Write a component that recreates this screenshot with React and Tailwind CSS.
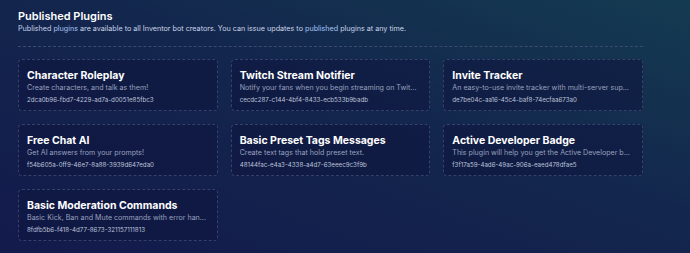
import React from "react";

const plugins = [
  { name: "Character Roleplay", desc: "Create characters, and talk as them!", id: "2dca0b96-fbd7-4229-ad7a-d0051e85fbc3" },
  { name: "Twitch Stream Notifier", desc: "Notify your fans when you begin streaming on Twit...", id: "cecdc287-c144-4bf4-8433-ecb533b9badb" },
  { name: "Invite Tracker", desc: "An easy-to-use invite tracker with multi-server sup...", id: "de7be04c-aa16-45c4-baf8-74ecfaa673a0" },
  { name: "Free Chat AI", desc: "Get AI answers from your prompts!", id: "f54b605a-0ff9-46e7-8a88-3939d647eda0" },
  { name: "Basic Preset Tags Messages", desc: "Create text tags that hold preset text.", id: "48144fac-e4a3-4338-a4d7-63eeec9c3f9b" },
  { name: "Active Developer Badge", desc: "This plugin will help you get the Active Developer b...", id: "f3f17a59-4ad6-49ac-906a-eaed478dfae5" },
  { name: "Basic Moderation Commands", desc: "Basic Kick, Ban and Mute commands with error han...", id: "8fdfb5b6-f418-4d77-8673-321157111813" },
];

export default function App() {
  return (
    <div
      className="w-[690px] h-[253px] overflow-hidden bg-[linear-gradient(200deg,#143b51_0%,#13264d_45%,#131a4c_100%)]"
      style={{ fontFamily: "Inter, 'Noto Sans', sans-serif" }}
    >
      <div className="ml-[18px] w-[625px] pt-[9px]">
        <h1 className="text-[11px] leading-[14px] font-semibold text-white">Published Plugins</h1>
        <p className="mt-[1px] text-[7.2px] leading-[10px] text-[#ccd4e8]">
          Published <span className="text-[#a9c6f5]">plugins</span> are available to all Inventor bot creators. You can issue updates to <span className="text-[#a9c6f5]">published</span> plugins at any time.
        </p>
        <div className="mt-[12px] border-t border-dashed border-[#3b4a70]" />
        <div className="mt-[12px] grid grid-cols-3 gap-[13px]">
          {plugins.map((p) => (
            <div
              key={p.id}
              className="h-[52px] rounded-[4px] border border-dashed border-[#35416a] bg-[#0f1640]/60 px-[8px] pt-[9px]"
            >
              <div className="text-[10.5px] leading-[13px] font-bold text-white whitespace-nowrap">{p.name}</div>
              <div className="mt-[1px] text-[7.1px] leading-[10px] text-[#98a1be] whitespace-nowrap">{p.desc}</div>
              <div className="mt-[1.5px] text-[6.2px] leading-[9px] text-[#bcc3d9] whitespace-nowrap">{p.id}</div>
            </div>
          ))}
        </div>
      </div>
    </div>
  );
}
